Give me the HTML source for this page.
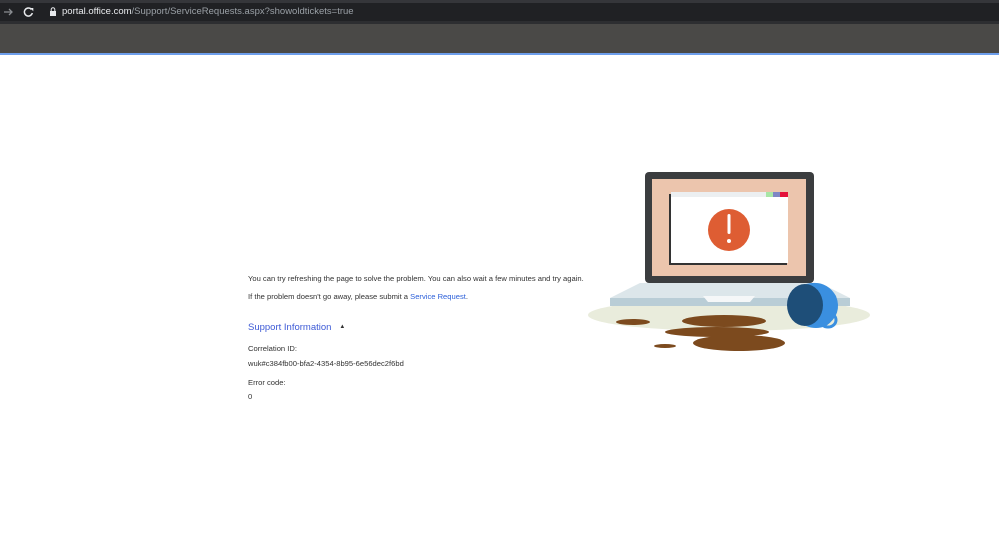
<!DOCTYPE html>
<html><head><meta charset="utf-8">
<style>
html,body{margin:0;padding:0;width:999px;height:538px;overflow:hidden;background:#fff;font-family:"Liberation Sans",sans-serif;}
.top{position:absolute;left:0;top:0;width:999px;height:3px;background:#35363a;}
.bar{position:absolute;left:0;top:3px;width:999px;height:18px;background:#202124;}
.bar2{position:absolute;left:0;top:21px;width:999px;height:3px;background:#2d2e31;}
.gray{position:absolute;left:0;top:24px;width:999px;height:29px;background:#4a4947;}
.blue{position:absolute;left:0;top:53px;width:999px;height:2px;background:#6d9eeb;}
.pill{position:absolute;left:42px;top:3px;right:0;height:18px;background:#202124;border-radius:9px 0 0 9px;}
.url{position:absolute;left:62px;top:5px;font-size:9.5px;color:#9aa0a6;line-height:14px;}
.url b{color:#e8eaed;font-weight:normal;}
.t{position:absolute;left:248px;font-size:7.6px;color:#333;white-space:nowrap;}
a{color:#2b5fd9;text-decoration:none;}
</style></head><body>
<div class="top"></div><div class="bar"></div><div class="bar2"></div><div class="gray"></div><div class="blue"></div>
<svg style="position:absolute;left:0;top:0" width="60" height="24">
<path d="M4 12h8M9 9l3 3-3 3" stroke="#8a8d91" stroke-width="1.3" fill="none"/>
<path d="M31.5 9.5a4 4 0 1 0 0.8 3.5" stroke="#e8eaed" stroke-width="1.5" fill="none"/>
<path d="M30 8h3.3v3.3z" fill="#e8eaed"/>
<rect x="50" y="11" width="6" height="5" fill="#e8eaed"/>
<path d="M51.2 11v-1.5a1.8 1.8 0 0 1 3.6 0v1.5" stroke="#e8eaed" fill="none"/>
</svg>
<div class="url"><b>portal.office.com</b>/Support/ServiceRequests.aspx?showoldtickets=true</div>

<div class="t" style="top:274px">You can try refreshing the page to solve the problem. You can also wait a few minutes and try again.</div>
<div class="t" style="top:292px">If the problem doesn't go away, please submit a <a>Service Request</a>.</div>
<div class="t" style="top:322px;font-size:9.5px;color:#3d5ad6">Support Information &nbsp;&nbsp;<span style="font-size:6px;color:#333;position:relative;top:-2px">&#9650;</span></div>
<div class="t" style="top:344px">Correlation ID:</div>
<div class="t" style="top:359px">wuk#c384fb00-bfa2-4354-8b95-6e56dec2f6bd</div>
<div class="t" style="top:378px">Error code:</div>
<div class="t" style="top:392px">0</div>

<svg style="position:absolute;left:0;top:0" width="999" height="538">
<ellipse cx="729" cy="315" rx="141" ry="16" fill="#e9ecdc"/>
<rect x="645" y="172" width="169" height="111" rx="4" fill="#3b3d3f"/>
<rect x="652" y="179" width="154" height="97" fill="#ecc5ad"/>
<rect x="669" y="194" width="118" height="71" fill="#333"/>
<rect x="671" y="192" width="117" height="71" fill="#fff"/>
<rect x="671" y="192" width="117" height="5" fill="#eceff1"/>
<rect x="766" y="192" width="7" height="5" fill="#a8e6a6"/>
<rect x="773" y="192" width="7" height="5" fill="#7e86c4"/>
<rect x="780" y="192" width="8" height="5" fill="#e4113a"/>
<circle cx="729" cy="230" r="21" fill="#de5d33"/>
<rect x="727.5" y="214" width="3" height="20" rx="1.5" fill="#fff"/>
<circle cx="729" cy="241" r="2" fill="#fff"/>
<path d="M640 283h180l30 15H610z" fill="#dce6ea"/>
<rect x="610" y="298" width="240" height="8" fill="#b9cdd6"/>
<path d="M703 296h52l-5 6h-42z" fill="#f5f7f8"/>
<ellipse cx="633" cy="322" rx="17" ry="3" fill="#7c4a1e"/>
<ellipse cx="724" cy="321" rx="42" ry="6" fill="#7c4a1e"/>
<ellipse cx="717" cy="332" rx="52" ry="5" fill="#7c4a1e"/>
<ellipse cx="739" cy="343" rx="46" ry="8" fill="#7c4a1e"/>
<ellipse cx="665" cy="346" rx="11" ry="2" fill="#7c4a1e"/>
<ellipse cx="828" cy="320" rx="8" ry="7" fill="none" stroke="#3a8fe0" stroke-width="3"/>
<path d="M806 284 q20 -5 30 12 q7 18 -10 30 q-10 4 -20 0z" fill="#3a8fe0"/>
<ellipse cx="805" cy="305" rx="18" ry="21" fill="#1e4e78"/>
</svg>
</body></html>
